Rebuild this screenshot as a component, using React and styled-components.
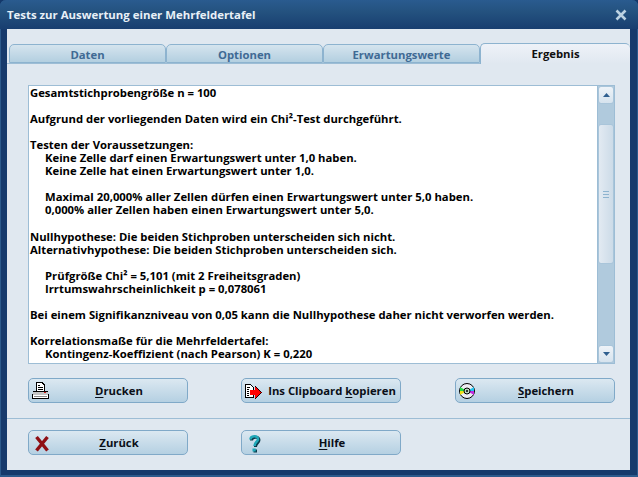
import React from 'react'
import styled, { createGlobalStyle } from 'styled-components'

const GlobalStyle = createGlobalStyle`
  html, body {
    margin: 0;
    padding: 0;
    background: #14386a;
    overflow: hidden;
  }
`

const Window = styled.div`
  width: 638px;
  height: 477px;
  box-sizing: border-box;
  display: flex;
  flex-direction: column;
  padding: 0 8px 7px 7px;
  background: #163a6c;
  border-radius: 6px 6px 0 0;
  font-family: 'Open Sans', 'DejaVu Sans', sans-serif;
  font-size: 11.3px;
  font-weight: 700;
  overflow: hidden;
  box-shadow: inset 1px 0 0 #2c5a8c, inset -1px 0 0 #2c5a8c, inset 0 -2px 0 #2c5a8c;
`

const TitleBar = styled.div`
  height: 29px;
  flex: none;
  margin: 0 -8px 0 -7px;
  padding: 0 11px 0 7px;
  display: flex;
  align-items: center;
  justify-content: space-between;
  background: linear-gradient(#2a5b8f 0%, #24527f 40%, #183e70 100%);
  color: #e8f0f7;
  font-size: 11.4px;
`

const Client = styled.div`
  flex: 1;
  display: flex;
  flex-direction: column;
  background: #e0e8f0;
`

const TabRow = styled.div`
  height: 35px;
  flex: none;
  padding: 15px 0 0 2px;
  box-sizing: border-box;
  display: flex;
  align-items: flex-end;
  border-bottom: 1px solid #9dbdd5;
`

const Tab = styled.div`
  width: ${p => p.$wide ? '150px' : '157px'};
  height: ${p => p.$active ? '21px' : '19px'};
  box-sizing: border-box;
  display: flex;
  align-items: center;
  justify-content: center;
  padding-top: ${p => p.$active ? '0' : '1px'};
  padding-bottom: ${p => p.$active ? '2px' : '0'};
  color: ${p => p.$active ? '#101010' : '#3f6a94'};
  background: ${p => p.$active ? 'linear-gradient(#eef2f8, #e0e8f0)' : 'linear-gradient(#d5e4ee, #b3cfe0)'};
  border: 1px solid #8db3cf;
  border-bottom: ${p => p.$active ? 'none' : '1px solid #8db3cf'};
  border-right: ${p => p.$active ? 'none' : '1px solid #8db3cf'};
  border-radius: 5px 5px 0 0;
  margin-bottom: ${p => p.$active ? '-1px' : '0'};
  position: relative;
`

const Body = styled.div`
  flex: none;
  display: flex;
  flex-direction: column;
  padding: 21px 15px 0 21px;
`

const TextPanel = styled.div`
  height: 279px;
  flex: none;
  box-sizing: border-box;
  display: flex;
  background: #fff;
  border: 1px solid #9dbdd5;
  border-right: none;
`

const ResultText = styled.div`
  flex: 1;
  padding: 0 0 0 1px;
  color: #000;
  line-height: 13.05px;
  white-space: pre;
  overflow: hidden;
`

const Line = styled.div`
  height: 13.05px;
  padding-left: ${p => p.$indent ? '15px' : '0'};
`

const ScrollBar = styled.div`
  width: 18px;
  flex: none;
  display: flex;
  flex-direction: column;
  background: #b0cadd;
  border-left: 1px solid #9dbdd5;
  border-right: 1px solid #9dbdd5;
  box-sizing: border-box;
`

const ScrollButton = styled.div`
  height: 18px;
  flex: none;
  box-sizing: border-box;
  display: flex;
  align-items: center;
  justify-content: center;
  background: linear-gradient(#eef3f8, #d6e3ee);
  border: 1px solid #a9c5da;
  border-radius: 3px;
`

const ScrollTrack = styled.div`
  flex: 1;
  display: flex;
  flex-direction: column;
  padding-top: ${p => p.$top}px;
  padding-bottom: 81px;
`

const ScrollThumb = styled.div`
  flex: 1;
  display: flex;
  align-items: center;
  justify-content: center;
  background: linear-gradient(90deg, #e2eaf2, #ccdbe8);
  border: 1px solid #a9c5da;
  border-radius: 3px;
`

const Grip = styled.div`
  width: 6px;
  height: 5px;
  border-top: 1px solid #8db3cf;
  border-bottom: 1px solid #8db3cf;
  background: linear-gradient(#8db3cf, #8db3cf) center / 100% 1px no-repeat;
`

const ButtonRow = styled.div`
  display: flex;
  gap: 53px;
  padding: 14px 0 15px 0;
  flex: none;

  > :last-child {
    margin-left: auto;
  }
`

const Button = styled.div`
  width: 160px;
  height: 25px;
  box-sizing: border-box;
  position: relative;
  display: flex;
  align-items: center;
  justify-content: center;
  padding-left: 22px;
  color: #0a0f18;
  background: linear-gradient(#dbe8f1, #b5d0e2);
  border: 1px solid #80a9c8;
  border-radius: 5px;
`

const IconSlot = styled.span`
  position: absolute;
  left: 3px;
  top: 3px;
  width: 18px;
  height: 19px;
  display: block;

  svg {
    display: block;
  }
`

const Divider = styled.div`
  height: 1px;
  flex: none;
  background: #9dbdd5;
`

const Footer = styled.div`
  display: flex;
  gap: 53px;
  padding: 11px 0 0 21px;
`

const Key = styled.span`
  text-decoration: underline;
  text-underline-offset: 2px;
`

const CloseIcon = () => (
  <svg width="12" height="12" viewBox="0 0 12 12">
    <path d="M1.5 1.5 L10.5 10.5 M10.5 1.5 L1.5 10.5" stroke="#bcd2e2" strokeWidth="2.6" />
  </svg>
)

const Arrow = ({ down }) => (
  <svg width="7" height="4" viewBox="0 0 7 4">
    <path d={down ? 'M0 0 H7 L3.5 4 Z' : 'M3.5 0 L7 4 H0 Z'} fill="#2f5f8f" />
  </svg>
)

const PrinterIcon = () => (
  <svg width="18" height="19" viewBox="0 0 18 19" shapeRendering="crispEdges">
    <path d="M4.5 0.5 H10 L12.5 3 V10 H4.5 Z" fill="#fff" stroke="#000" />
    <path d="M6 3.5 H8 M6 5.5 H11 M6 7.5 H11" stroke="#000" />
    <path d="M1.5 9.5 H15.5 V12 H1.5 Z" fill="#d8d8d8" stroke="#000" />
    <rect x="0.5" y="12.5" width="16" height="4" fill="#fff" stroke="#000" />
    <rect x="1" y="10" width="15" height="3" fill="#c4c4c4" />
    <rect x="12" y="10" width="2" height="1" fill="#d01c1c" />
    <rect x="2" y="14" width="13" height="1" fill="#888" />
  </svg>
)

const ClipboardIcon = () => (
  <svg width="18" height="19" viewBox="0 0 18 19" shapeRendering="crispEdges">
    <path d="M0.5 2.5 H5.5 L8.5 5.5 V15.5 H0.5 Z" fill="#fff" stroke="#000" />
    <path d="M2 5.5 H5 M2 7.5 H4 M2 9.5 H4 M2 11.5 H4 M2 13.5 H4" stroke="#000" />
    <path d="M5 8 H10 V4 L16.5 10.5 L10 17 V13 H5 Z" fill="#f00" />
    <path d="M10 4 L16.5 10.5 L10 17" fill="none" stroke="#200" shapeRendering="auto" />
  </svg>
)

const DiscIcon = () => (
  <svg width="18" height="19" viewBox="0 0 18 19">
    <circle cx="8" cy="9" r="7.5" fill="#ececf2" stroke="#000" />
    <path d="M8 9 L1 5 V9 Z" fill="#25dd45" />
    <path d="M8 9 L1 13 V9 Z" fill="#f0e018" />
    <path d="M8 9 L15 5 V9 Z" fill="#22c4f0" />
    <path d="M8 9 L15 13 V9 Z" fill="#c22de0" />
    <circle cx="8" cy="9" r="3" fill="#bcd8c0" stroke="#000" />
    <circle cx="8" cy="9" r="1" fill="#000" />
  </svg>
)

const CrossIcon = () => (
  <svg width="18" height="19" viewBox="0 0 18 19">
    <path d="M4.5 3 L15.5 16.5 M15.5 3 L4.5 16.5" stroke="#8f0f14" strokeWidth="3.4" />
  </svg>
)

const HelpIcon = () => (
  <svg width="18" height="19" viewBox="0 0 18 19" fill="none">
    <path d="M6.5 6.5 C6.5 2.5 14 2 14 6 C14 9 10.5 9 10.5 13" stroke="#0b3a4a" strokeWidth="3" />
    <rect x="8.5" y="15.5" width="3.5" height="3" fill="#0b3a4a" />
    <path d="M5.5 5.5 C5.5 1.5 13 1 13 5 C13 8 9.5 8 9.5 12" stroke="#1fa8b8" strokeWidth="2.6" />
    <rect x="7.5" y="14.5" width="3.2" height="3" fill="#1fa8b8" />
  </svg>
)

const tabs = [
  { label: 'Daten' },
  { label: 'Optionen' },
  { label: 'Erwartungswerte' },
  { label: 'Ergebnis', active: true, wide: true },
]

const lines = [
  ['Gesamtstichprobengröße n = 100'],
  [''],
  ['Aufgrund der vorliegenden Daten wird ein Chi²-Test durchgeführt.'],
  [''],
  ['Testen der Voraussetzungen:'],
  ['Keine Zelle darf einen Erwartungswert unter 1,0 haben.', true],
  ['Keine Zelle hat einen Erwartungswert unter 1,0.', true],
  [''],
  ['Maximal 20,000% aller Zellen dürfen einen Erwartungswert unter 5,0 haben.', true],
  ['0,000% aller Zellen haben einen Erwartungswert unter 5,0.', true],
  [''],
  ['Nullhypothese: Die beiden Stichproben unterscheiden sich nicht.'],
  ['Alternativhypothese: Die beiden Stichproben unterscheiden sich.'],
  [''],
  ['Prüfgröße Chi² = 5,101 (mit 2 Freiheitsgraden)', true],
  ['Irrtumswahrscheinlichkeit p = 0,078061', true],
  [''],
  ['Bei einem Signifikanzniveau von 0,05 kann die Nullhypothese daher nicht verworfen werden.'],
  [''],
  ['Korrelationsmaße für die Mehrfeldertafel:'],
  ['Kontingenz-Koeffizient (nach Pearson) K = 0,220', true],
]

export default function App() {
  return (
    <>
      <GlobalStyle />
      <Window>
        <TitleBar>
          <span>Tests zur Auswertung einer Mehrfeldertafel</span>
          <CloseIcon />
        </TitleBar>
        <Client>
          <TabRow>
            {tabs.map(t => (
              <Tab key={t.label} $active={t.active} $wide={t.wide}>{t.label}</Tab>
            ))}
          </TabRow>
          <Body>
            <TextPanel>
              <ResultText>
                {lines.map(([text, indent], i) => (
                  <Line key={i} $indent={indent}>{text}</Line>
                ))}
              </ResultText>
              <ScrollBar>
                <ScrollButton><Arrow /></ScrollButton>
                <ScrollTrack $top={20}>
                  <ScrollThumb><Grip /></ScrollThumb>
                </ScrollTrack>
                <ScrollButton><Arrow down /></ScrollButton>
              </ScrollBar>
            </TextPanel>
            <ButtonRow>
              <Button>
                <IconSlot><PrinterIcon /></IconSlot>
                <span><Key>D</Key>rucken</span>
              </Button>
              <Button>
                <IconSlot><ClipboardIcon /></IconSlot>
                <span>Ins Clipboard <Key>k</Key>opieren</span>
              </Button>
              <Button>
                <IconSlot><DiscIcon /></IconSlot>
                <span><Key>S</Key>peichern</span>
              </Button>
            </ButtonRow>
          </Body>
          <Divider />
          <Footer>
            <Button>
              <IconSlot><CrossIcon /></IconSlot>
              <span><Key>Z</Key>urück</span>
            </Button>
            <Button>
              <IconSlot><HelpIcon /></IconSlot>
              <span><Key>H</Key>ilfe</span>
            </Button>
          </Footer>
        </Client>
      </Window>
    </>
  )
}
